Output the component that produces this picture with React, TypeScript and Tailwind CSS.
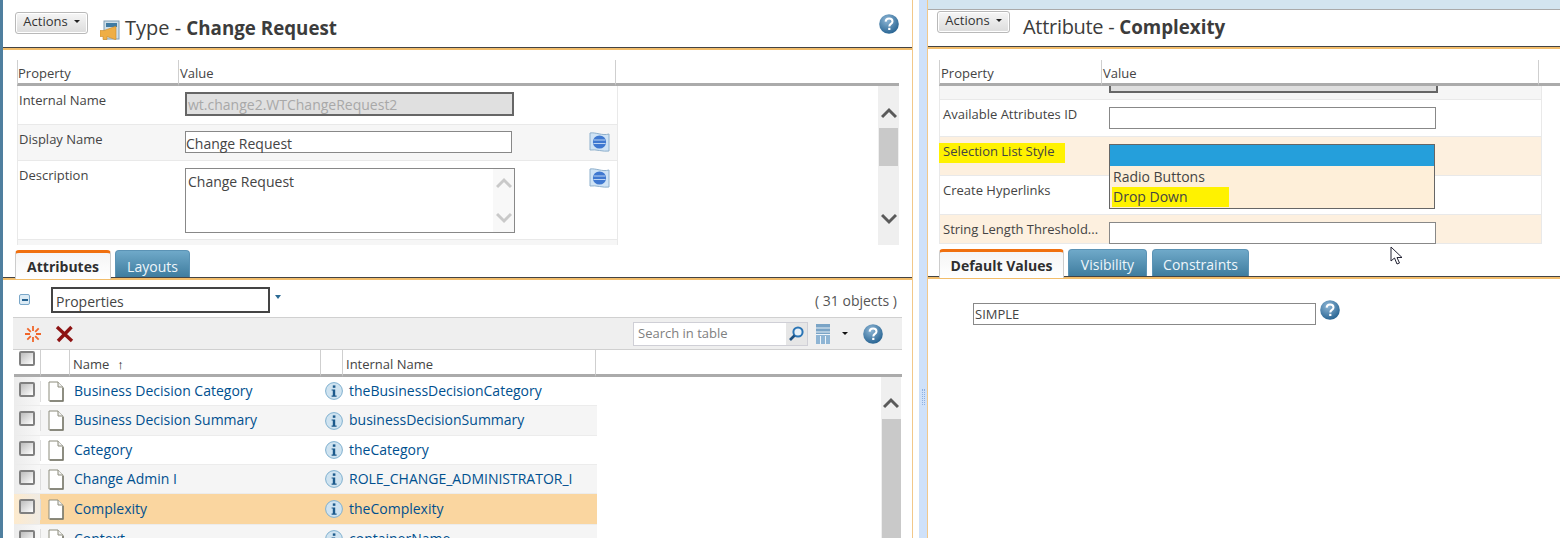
import React from "react";

const font = { fontFamily: '"Open Sans", "Noto Sans", sans-serif' };

function Caret() {
  return <span className="ml-[6px] inline-block border-x-[3px] border-t-[3px] border-x-transparent border-t-[#222]" />;
}

function ActionsButton() {
  return (
    <div className="flex h-[22px] w-[73px] items-start justify-center rounded-[3px] border border-[#b9b9b9] bg-gradient-to-b from-[#f6f6f6] to-[#dcdcdc] text-[13px] leading-[16px] text-[#333] shadow-[inset_0_0_0_1px_#fff]">
      <span className="flex items-center">Actions<Caret /></span>
    </div>
  );
}

function Help({ size = 20 }: { size?: number }) {
  return (
    <svg width={size} height={size} viewBox="0 0 20 20" className="shrink-0">
      <defs>
        <radialGradient id="hg" cx="40%" cy="30%" r="75%">
          <stop offset="0" stopColor="#8fb7d6" />
          <stop offset="1" stopColor="#23608f" />
        </radialGradient>
      </defs>
      <circle cx="10" cy="10" r="9.8" fill="url(#hg)" />
      <path d="M6.6 7.6c.2-2 1.6-3 3.5-3 2 0 3.4 1.1 3.4 2.8 0 2.5-3.2 2.5-3.2 5" fill="none" stroke="#fff" strokeWidth="2" />
      <rect x="9.2" y="13.8" width="2.2" height="2.2" fill="#fff" />
    </svg>
  );
}

function TypeIcon() {
  return (
    <svg width="20" height="20" viewBox="0 0 20 20" className="shrink-0">
      <rect x="4" y="1" width="15" height="18" fill="#cfdfe9" stroke="#7f9db3" />
      <rect x="6" y="3" width="11" height="4" fill="#3f7ba3" />
      <path d="M0 10.5h4l11-4h1v13h-1l-8-3v3H3v-3H0z" fill="#efae45" stroke="#c98a28" strokeWidth=".6" />
    </svg>
  );
}

function Flag() {
  return (
    <svg width="21" height="20" viewBox="0 0 21 20">
      <path d="M1 1c6-1 12 3 19 1v17c-6 1-13-2-19-1z" fill="#cfe3f5" stroke="#8fb0cc" />
      <circle cx="10.5" cy="10" r="6.6" fill="#3f78d0" />
      <path d="M5 8h11M4.5 11.5h12" stroke="#bcd4f2" strokeWidth="1" />
    </svg>
  );
}

function Chevron({ up, color = "#5a5a5a" }: { up?: boolean; color?: string }) {
  return (
    <svg width="16" height="12" viewBox="0 0 16 12">
      <path d={up ? "M1 10l7-7 7 7" : "M1 2l7 7 7-7"} fill="none" stroke={color} strokeWidth="3" />
    </svg>
  );
}

function Th({ w, children, extra = "" }: { w?: number; children?: React.ReactNode; extra?: string }) {
  return (
    <div
      className={"flex h-full items-end border-b-[3px] border-l border-b-[#ababab] border-l-[#cfcfcf] pb-[1px] pl-[1px] text-[13px] leading-[18px] text-[#444] " + extra}
      style={w ? { width: w } : { flex: 1 }}
    >
      {children}
    </div>
  );
}

function Tab({ label, active, w, low }: { label: string; active?: boolean; w: number; low?: boolean }) {
  if (active)
    return (
      <div
        className="relative z-10 -mb-[2px] flex h-[29px] shrink-0 items-center justify-center rounded-t-[4px] border-x border-t-[3px] border-x-[#ccc] border-t-[#f0700f] bg-gradient-to-b from-[#f5f5f5] to-white pt-[1px] text-[14px] font-bold text-[#2f2f2f]"
        style={{ width: w }}
      >
        {label}
      </div>
    );
  return (
    <div
      className={
        "flex h-[27px] shrink-0 items-center justify-center rounded-t-[4px] border border-b-0 border-[#5b93b5] bg-gradient-to-b from-[#6fa9c9] to-[#3f7d9f] text-[14px] text-[#eef6fb] " +
        (low ? "pt-[5px]" : "pt-[3px]")
      }
      style={{ width: w }}
    >
      {label}
    </div>
  );
}

function TabLine() {
  return <div className="h-[3px] shrink-0 border-t border-t-[#444] bg-[#f2bd6b]" />;
}

function PropRow({
  label,
  h,
  bg = "bg-white",
  labelPad = "pt-[5px]",
  children,
}: {
  label: string;
  h: number;
  bg?: string;
  labelPad?: string;
  children?: React.ReactNode;
}) {
  return (
    <div className={"flex border-b border-x border-[#e9e9e9] " + bg} style={{ height: h }}>
      <div className={"w-[167px] shrink-0 pl-[1px] text-[13px] leading-[18px] text-[#444] " + labelPad}>
        <span>{label}</span>
      </div>
      <div className="relative flex-1 pt-[6px]">{children}</div>
    </div>
  );
}

const rows = [
  ["Business Decision Category", "theBusinessDecisionCategory", 29],
  ["Business Decision Summary", "businessDecisionSummary", 30],
  ["Category", "theCategory", 29],
  ["Change Admin I", "ROLE_CHANGE_ADMINISTRATOR_I", 29],
  ["Complexity", "theComplexity", 31],
  ["Context", "containerName", 29],
] as const;

function Check() {
  return <div className="h-[15px] w-[16px] rounded-[2px] border-2 border-[#808080] bg-gradient-to-br from-[#bdbdbd] to-white" />;
}

function Doc() {
  return (
    <svg width="16" height="21" viewBox="0 0 16 21">
      <path d="M1 1h9l5 5v14H1z" fill="#fff" stroke="#8c8c7c" />
      <path d="M10 1v5h5" fill="#eee" stroke="#8c8c7c" />
      <path d="M2 20h13V7" fill="none" stroke="#77776a" strokeWidth="1.4" />
    </svg>
  );
}

function Info() {
  return (
    <svg width="18" height="18" viewBox="0 0 18 18">
      <circle cx="9" cy="9" r="8.4" fill="#cfe3f0" stroke="#7fb0cf" />
      <rect x="7.8" y="3.4" width="2.6" height="2.4" fill="#1c5a8c" />
      <path d="M6.6 7.4h3.6v6.2h1.4v1.2H6.6v-1.2h1.2V8.6H6.6z" fill="#1c5a8c" />
    </svg>
  );
}

function TableRow({ row, i }: { row: (typeof rows)[number]; i: number }) {
  const sel = i === 4;
  const bg = sel ? "bg-[#fad6a0]" : i % 2 ? "bg-[#f5f5f5]" : "bg-white";
  const chk = sel ? "from-[#fdeacd] to-[#f0ebe3]" : "from-[#ececec] to-[#f8f8f8]";
  return (
    <div className={"flex items-center border-b border-[#ececec] " + bg} style={{ height: row[2] }}>
      <div className={"flex h-full w-[26px] shrink-0 justify-center bg-gradient-to-r pt-[5px] " + chk}>
        <Check />
      </div>
      <div className="flex w-[29px] shrink-0 justify-center border-l border-[#ddd] pl-[1px]"><Doc /></div>
      <div className="w-[251px] shrink-0 pb-[2px] pl-[5px] text-[14px] text-[#00508f]">{row[0]}</div>
      <div className="w-[29px] shrink-0 pl-[5px]"><Info /></div>
      <div className="flex-1 whitespace-nowrap pb-[2px] text-[14px] text-[#00508f]">{row[1]}</div>
    </div>
  );
}

function Burst() {
  return (
    <svg width="18" height="18" viewBox="0 0 18 18">
      <g stroke="#f0662a" strokeWidth="1.8">
        <path d="M9 1v5M9 12v5M1 9h5M12 9h5M3.3 3.3l3.5 3.5M11.2 11.2l3.5 3.5M14.7 3.3l-3.5 3.5M6.8 11.2l-3.5 3.5" />
      </g>
    </svg>
  );
}

function RedX() {
  return (
    <svg width="19" height="18" viewBox="0 0 19 18">
      <path d="M2 2l15 14M16.5 2L3 16" stroke="#8e1414" strokeWidth="3.4" />
    </svg>
  );
}

function Grid() {
  return (
    <svg width="14" height="20" viewBox="0 0 14 20">
      <rect x="0" y="0" width="14" height="20" fill="#7aa4c6" />
      <path d="M0 4h14M0 8h14" stroke="#e8f0f6" />
      <rect x="0" y="11" width="14" height="9" fill="#8fb5d4" />
      <path d="M0 10.5h14M4.5 12v8M9.5 12v8" stroke="#eef4f9" />
    </svg>
  );
}

function LeftPanel() {
  return (
    <div className="flex w-[910px] shrink-0 flex-col border-r border-[#f2c88a]">
      <div className="flex h-[47px] shrink-0 items-start pl-[12px] pr-[13px] pt-[12px]">
        <ActionsButton />
        <div className="ml-[12px] mt-[8px]"><TypeIcon /></div>
        <div className="ml-[5px] mt-[2px] text-[20px] leading-[27px] text-[#3c3c3c]">
          Type - <b className="text-[18.75px] font-bold">Change Request</b>
        </div>
        <div className="ml-auto mt-[2px]"><Help /></div>
      </div>
      <TabLine />
      <div className="mx-[13px] ml-[14px] mt-[10px] flex h-[26px] shrink-0">
        <Th w={161} extra="!pl-0">Property</Th>
        <Th w={437}>Value</Th>
        <Th />
      </div>
      <div className="mx-[13px] ml-[14px] flex h-[159px] shrink-0 overflow-hidden">
        <div className="w-[601px] shrink-0">
          <PropRow label="Internal Name" h={39}>
            <div className="h-[24px] w-[329px] border-2 border-[#666] bg-[#e0e0e0] pl-[1px] text-[14px] leading-[22px] text-[#a8a8a8]">
              wt.change2.WTChangeRequest2
            </div>
          </PropRow>
          <PropRow label="Display Name" h={36} bg="bg-[#f6f6f6]">
            <div className="h-[22px] w-[327px] border border-[#888] bg-white text-[14px] leading-[23px] text-[#444]">Change Request</div>
            <div className="absolute left-[404px] top-[7px]"><Flag /></div>
          </PropRow>
          <PropRow label="Description" h={79}>
            <div className="mt-[1px] flex h-[65px] w-[330px] border border-[#888] bg-white pl-[2px] pt-[3px] text-[14px] leading-[20px] text-[#444]">
              <span className="flex-1">Change Request</span>
              <div className="-mt-[3px] flex w-[21px] flex-col items-center justify-between bg-[#f8f8f8] py-[8px]">
                <Chevron up color="#c9c9c9" />
                <Chevron color="#c9c9c9" />
              </div>
            </div>
            <div className="absolute left-[404px] top-[7px]"><Flag /></div>
          </PropRow>
          <div className="h-[5px] border-x border-[#e9e9e9] bg-[#f6f6f6]" />
        </div>
        <div className="ml-auto flex h-full w-[21px] flex-col items-center bg-[#efefef]">
          <div className="flex h-[42px] items-end pb-[9px]"><Chevron up /></div>
          <div className="h-[38px] w-[19px] bg-[#c9c9c9]" />
          <div className="mt-[47px]"><Chevron /></div>
        </div>
      </div>
      <div className="mt-[6px] flex h-[26px] shrink-0 items-end pl-[12px]">
        <Tab label="Attributes" active w={96} />
        <div className="w-[4px]" />
        <Tab label="Layouts" w={75} low />
      </div>
      <TabLine />
      <div className="flex h-[37px] shrink-0 items-start pl-[16px] pr-[15px] pt-[7px]">
        <div className="mt-[7px] flex h-[11px] w-[11px] items-center justify-center rounded-[2px] border border-[#7aa7c9] bg-[#dcebf5]">
          <div className="h-[2px] w-[6px] bg-[#24608e]" />
        </div>
        <div className="ml-[21px] h-[26px] w-[219px] border-2 border-[#444] bg-white pl-[3px] pt-[3px] text-[14px] leading-[20px] text-[#444]">Properties</div>
        <div className="ml-[5px] mt-[8px] border-x-[3px] border-t-[4px] border-x-transparent border-t-[#2b6a94]" />
        <div className="ml-auto mt-[4px] text-[14px] leading-[20px] text-[#555]">( 31 objects )</div>
      </div>
      <div className="ml-[10px] flex h-[33px] w-[889px] shrink-0 items-center border-y border-[#d0d0d0] bg-[#efefef] pl-[11px]">
        <Burst />
        <div className="ml-[13px]"><RedX /></div>
        <div className="ml-auto flex h-[24px] w-[175px] items-center border border-[#cfcfd6] bg-white">
          <span className="flex-1 pl-[4px] pt-[1px] text-[13px] text-[#808080]">Search in table</span>
          <div className="flex h-full w-[21px] items-center justify-center bg-[#e6e6e6]">
            <svg width="17" height="17" viewBox="0 0 17 17">
              <circle cx="10" cy="7" r="4.6" fill="#e6f0f8" stroke="#2a74b5" strokeWidth="2" />
              <path d="M6.5 10.5L2 15" stroke="#1c4f80" strokeWidth="2.6" />
            </svg>
          </div>
        </div>
        <div className="ml-[8px]"><Grid /></div>
        <div className="ml-[12px] border-x-[3px] border-t-[3px] border-x-transparent border-t-[#111]" />
        <div className="ml-[15px] mr-[19px]"><Help /></div>
      </div>
      <div className="ml-[11px] flex h-[27px] w-[888px] shrink-0">
        <div className="relative flex h-full w-[26px] justify-center border-b-[3px] border-[#ababab] pt-[1px]"><Check /></div>
        <Th w={29} />
        <Th w={251} extra="pl-[3px]">
          Name<span className="ml-[8px] font-bold text-[#222]">↑</span>
        </Th>
        <Th w={22} />
        <Th w={253} extra="pl-[3px]">Internal Name</Th>
        <Th />
      </div>
      <div className="ml-[11px] flex min-h-0 w-[888px] flex-1 overflow-hidden">
        <div className="w-[583px] shrink-0">
          {rows.map((r, i) => <TableRow key={r[0]} row={r} i={i} />)}
        </div>
        <div className="ml-auto mr-[1px] flex w-[20px] flex-col items-center bg-[#efefef]">
          <div className="flex h-[42px] items-end pb-[10px]"><Chevron up /></div>
          <div className="w-[19px] flex-1 bg-[#c9c9c9]" />
        </div>
      </div>
    </div>
  );
}

function RightPanel() {
  const inp = "h-[22px] w-[327px] border border-[#888] bg-white ml-[2px]";
  return (
    <div className="relative flex min-w-0 flex-1 flex-col border-l border-[#f2c88a]">
      <div className="h-[10px] shrink-0 border-b border-[#aaa] bg-[#d3e5f0]" />
      <div className="flex h-[36px] shrink-0 items-start pl-[9px] pt-[1px]">
        <ActionsButton />
        <div className="ml-[13px] mt-[2px] text-[20px] leading-[27px] text-[#3c3c3c]">
          <span className="tracking-[-0.3px]">Attribute - </span><b className="text-[18.75px] font-bold">Complexity</b>
        </div>
      </div>
      <TabLine />
      <div className="ml-[11px] mt-[11px] flex h-[26px] shrink-0">
        <Th w={162}>Property</Th>
        <Th w={437}>Value</Th>
        <Th />
      </div>
      <div className="ml-[11px] h-[158px] w-[603px] shrink-0 overflow-hidden">
        <div className="flex h-[14px] items-start border-b border-x border-[#e9e9e9] bg-[#f6f6f6]">
          <div className="ml-[169px] h-[7px] w-[329px] border-x-2 border-b-2 border-[#666] bg-[#dedede]" />
        </div>
        <PropRow label="Available Attributes ID" h={37} labelPad="pt-[5px] pl-[3px]">
          <div className={inp + " mt-[1px]"} />
        </PropRow>
        <PropRow label="Selection List Style" h={39} bg="bg-[#fdf0df]" />
        <PropRow label="Create Hyperlinks" h={39} labelPad="pt-[5px] pl-[3px]" />
        <PropRow label="String Length Threshold..." h={29} bg="bg-[#fdf0df]" labelPad="pt-[5px] pl-[3px]">
          <div className={inp + " mt-[1px]"} />
        </PropRow>
      </div>
      <div className="h-[6px] shrink-0" />
      <div className="flex h-[26px] shrink-0 items-end pl-[11px]">
        <Tab label="Default Values" active w={125} />
        <div className="w-[4px]" />
        <Tab label="Visibility" w={79} />
        <div className="w-[5px]" />
        <Tab label="Constraints" w={97} />
      </div>
      <TabLine />
      <div className="flex items-start pl-[45px] pt-[24px]">
        <div className="h-[22px] w-[343px] border border-[#888] bg-white pl-[1px] text-[13px] leading-[21px] text-[#444]">SIMPLE</div>
        <div className="ml-[4px] -mt-[3px]"><Help /></div>
      </div>

      <div className="absolute left-[11px] top-[143px] flex h-[20px] w-[126px] items-center bg-[#fff200] pb-[2px] pl-[4px] text-[13px] text-[#444]">Selection List Style</div>
      <div className="absolute left-[181px] top-[144px] h-[65px] w-[326px] border border-[#666] bg-[#feefd9] text-[14px] leading-[20px] text-[#444]">
        <div className="h-[21px] bg-[#259fdb]" />
        <div className="pl-[3px] pt-[1px]">Radio Buttons</div>
        <div className="pl-[3px]"><span className="-ml-[1px] inline-block w-[117px] bg-[#fff200] pl-[1px]">Drop Down</span></div>
      </div>
      <div className="absolute left-[462px] top-[246px]">
        <svg width="13" height="19" viewBox="0 0 13 19">
          <path d="M1 1v14l3.5-3 2.5 6 2.5-1-2.5-5.5H12z" fill="#fff" stroke="#223" />
        </svg>
      </div>
    </div>
  );
}

export default function App() {
  return (
    <div className="flex h-[538px] w-[1560px] overflow-hidden bg-white" style={font}>
      <div className="w-[3px] shrink-0 bg-[#4f7f9f]" />
      <LeftPanel />
      <div className="flex w-[14px] shrink-0">
        <div className="w-[6px]" />
        <div className="flex flex-1 items-center justify-center bg-[#cfe1f9]">
          <div className="mt-[255px] h-[16px] w-[3px] border-x border-dotted border-[#8fb0e0]" />
        </div>
      </div>
      <RightPanel />
    </div>
  );
}
